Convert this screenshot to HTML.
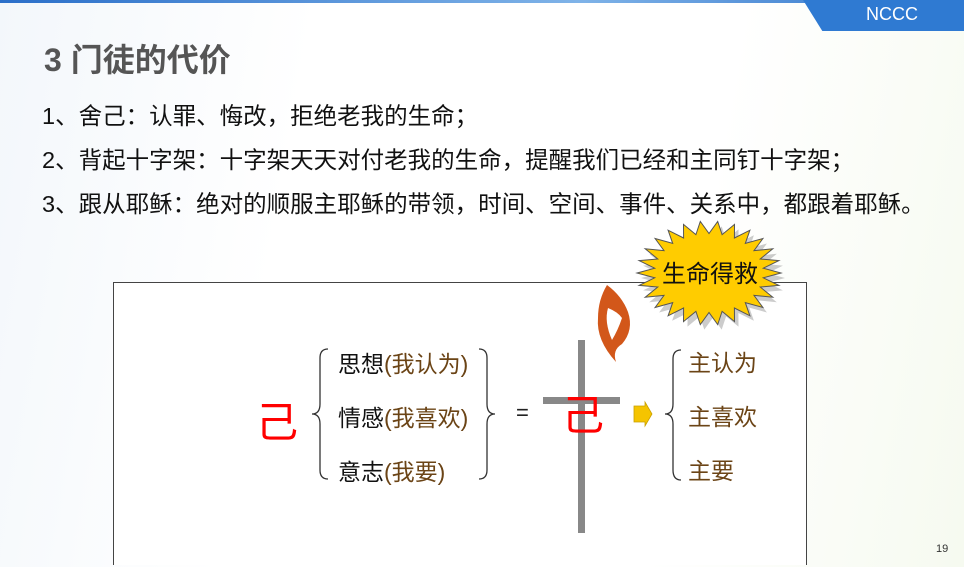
<!DOCTYPE html>
<html><head><meta charset="utf-8"><style>
body{margin:0;width:964px;height:567px;overflow:hidden;background:#fff;position:relative;font-family:"Liberation Sans","Noto Sans CJK SC",sans-serif}
.a{position:absolute;white-space:nowrap}
.bg{position:absolute;left:0;top:0;width:964px;height:567px;background:linear-gradient(100deg,#f3f7fb 0%,#fff 30%,#fff 70%,#f6faf0 100%)}
.line{position:absolute;left:0;top:0;width:964px;height:3px;background:linear-gradient(90deg,#2b6fc9,#7fb3e8 60%,#2b6fc9)}
.tab{position:absolute;left:803px;top:0;width:161px;height:31px;background:#2f7ad2;clip-path:polygon(0 0,100% 0,100% 100%,12% 100%);border-bottom-left-radius:4px}
.t{font-size:23.5px;color:#111;left:42px}
.it{font-size:23px;color:#111;left:338px}
.it span{color:#6b4416}
.r{font-size:23px;color:#6b4416;left:688px}
</style></head><body>
<div class="bg"></div><div class="line"></div><div class="tab"></div>
<div class="a" style="left:866px;top:4px;color:#fff;font-size:18px">NCCC</div>
<div class="a" style="left:44px;top:35px;font-size:32px;font-weight:bold;color:#555">3 门徒的代价</div>
<div class="a t" style="top:97px">1、舍己：认罪、悔改，拒绝老我的生命；</div>
<div class="a t" style="top:141px">2、背起十字架：十字架天天对付老我的生命，提醒我们已经和主同钉十字架；</div>
<div class="a t" style="top:185px">3、跟从耶稣：绝对的顺服主耶稣的带领，时间、空间、事件、关系中，都跟着耶稣。</div>
<div class="a" style="left:113px;top:282px;width:692px;height:282px;border:1px solid #444;border-bottom:none;background:#fff"></div>
<div class="a" style="left:256px;top:389px;font-size:42px;color:#f00">己</div>
<svg class="a" style="left:0;top:0" width="964" height="567">
<path d="M328 349 Q320 349 320 358 L320 404 Q320 414 312 414 Q320 414 320 424 L320 470 Q320 479 328 479" fill="none" stroke="#333" stroke-width="1.3"/>
<path d="M479 349 Q487 349 487 358 L487 404 Q487 414 495 414 Q487 414 487 424 L487 470 Q487 479 479 479" fill="none" stroke="#333" stroke-width="1.3"/>
<path d="M681 350 Q673 350 673 359 L673 404 Q673 414 665 414 Q673 414 673 424 L673 470 Q673 480 681 480" fill="none" stroke="#333" stroke-width="1.3"/>
<rect x="578" y="340" width="7" height="193" fill="#888"/>
<rect x="543" y="397" width="77" height="7" fill="#888"/>
<path d="M634 406 L645 406 L645 402 L652 414 L645 426 L645 422 L634 422 Z" fill="#f5c400" stroke="#c9a000" stroke-width="0.8"/>
<path d="M607 285 Q598 300 598 318 Q596 340 616 362 Q612 350 622 344 Q634 330 628 312 Q622 296 607 285 Z" fill="#d2571a"/>
<path d="M608 308 Q604 322 612 340 Q618 330 622 318 Q618 312 608 308Z" fill="#fff"/>
<polygon id="star2" fill="#999" opacity="0.5" transform="translate(713,278)"/>
<polygon id="star" fill="#ffcc00" stroke="#555" stroke-width="1" transform="translate(709,273)"/>
</svg>
<div class="a" style="left:662px;top:254px;font-size:24px;color:#111">生命得救</div>
<div class="a" style="left:562px;top:382px;font-size:42px;color:#f00">己</div>
<div class="a" style="left:516px;top:400px;font-size:22px;color:#222">=</div>
<div class="a it" style="top:345px">思想<span>(我认为)</span></div>
<div class="a it" style="top:399px">情感<span>(我喜欢)</span></div>
<div class="a it" style="top:453px">意志<span>(我要)</span></div>
<div class="a r" style="top:344px">主认为</div>
<div class="a r" style="top:398px">主喜欢</div>
<div class="a r" style="top:452px">主要</div>
<div class="a" style="left:936px;top:543px;font-size:11px;color:#333">19</div>
<script>
var p=[],n=26;for(var i=0;i<n*2;i++){var a=Math.PI*i/n,r=i%2?0.76:1;p.push((Math.cos(a)*72*r).toFixed(1)+','+(Math.sin(a)*52*r).toFixed(1));}
document.getElementById('star').setAttribute('points',p.join(' '));
document.getElementById('star2').setAttribute('points',p.join(' '));
</script>
</body></html>
